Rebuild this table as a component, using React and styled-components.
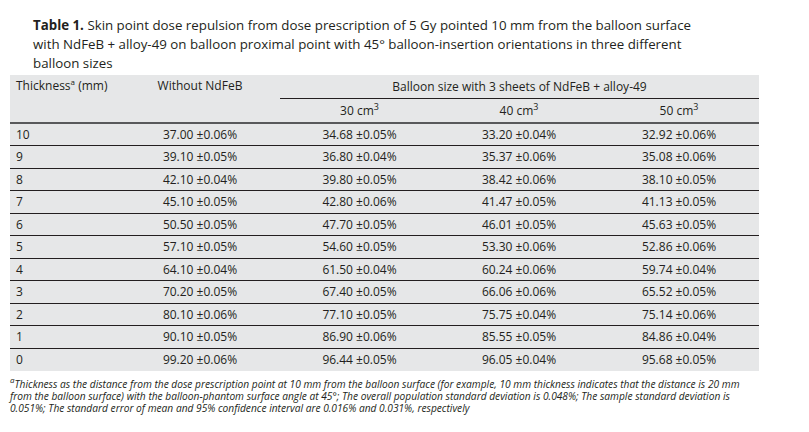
import React from "react";
import styled, { createGlobalStyle } from "styled-components";

const Global = createGlobalStyle`
  html, body { margin: 0; padding: 0; background: #fff; }
  body { font-family: "Open Sans", "Liberation Sans", sans-serif; color: #231f20; }
`;

const Page = styled.div`
  width: 809px;
  height: 432px;
  padding: 16px 0 0 10px;
  box-sizing: border-box;
  overflow: hidden;
`;

const Caption = styled.div`
  padding-left: 23px;
  font-size: 13.3px;
  line-height: 19px;
  white-space: nowrap;
  margin-bottom: 2px;
  b { font-weight: 700; }
`;

const Table = styled.table`
  width: 749px;
  border-collapse: collapse;
  background: #e6e7e8;
  font-size: 12px;
  table-layout: fixed;
`;

const Head = styled.thead`
  border-bottom: 2px solid #58595b;
`;

const Th = styled.th`
  font-weight: 400;
  height: 23px;
  padding: 0;
  padding-left: ${(p) => (p.$left ? 6 : 0)}px;
  text-align: ${(p) => (p.$left ? "left" : "center")};
  vertical-align: ${(p) => (p.$top ? "top" : "middle")};
  line-height: 22px;
  border-bottom: ${(p) => (p.$rule ? "1px solid #231f20" : "none")};
`;

const Sup = styled.sup`
  font-size: ${(p) => p.$size || 8}px;
  vertical-align: 5px;
  line-height: 0;
`;

const Row = styled.tr`
  height: 22.5px;
  td { border-bottom: 1px solid #231f20; }
  &:last-child td { border-bottom: none; }
`;

const Td = styled.td`
  padding: 0;
  padding-left: ${(p) => (p.$left ? 6 : 0)}px;
  text-align: ${(p) => (p.$left ? "left" : "center")};
  line-height: 21px;
`;

const Foot = styled.div`
  margin-top: 7px;
  font-size: 10.2px;
  line-height: 12.4px;
  font-style: italic;
  white-space: nowrap;
`;

const FootLine = styled.div`
  height: 12px;
`;

const rows = [
  ["10", "37.00 ±0.06%", "34.68 ±0.05%", "33.20 ±0.04%", "32.92 ±0.06%"],
  ["9", "39.10 ±0.05%", "36.80 ±0.04%", "35.37 ±0.06%", "35.08 ±0.06%"],
  ["8", "42.10 ±0.04%", "39.80 ±0.05%", "38.42 ±0.06%", "38.10 ±0.05%"],
  ["7", "45.10 ±0.05%", "42.80 ±0.06%", "41.47 ±0.05%", "41.13 ±0.05%"],
  ["6", "50.50 ±0.05%", "47.70 ±0.05%", "46.01 ±0.05%", "45.63 ±0.05%"],
  ["5", "57.10 ±0.05%", "54.60 ±0.05%", "53.30 ±0.06%", "52.86 ±0.06%"],
  ["4", "64.10 ±0.04%", "61.50 ±0.04%", "60.24 ±0.06%", "59.74 ±0.04%"],
  ["3", "70.20 ±0.05%", "67.40 ±0.05%", "66.06 ±0.06%", "65.52 ±0.05%"],
  ["2", "80.10 ±0.06%", "77.10 ±0.05%", "75.75 ±0.04%", "75.14 ±0.06%"],
  ["1", "90.10 ±0.05%", "86.90 ±0.06%", "85.55 ±0.05%", "84.86 ±0.04%"],
  ["0", "99.20 ±0.06%", "96.44 ±0.05%", "96.05 ±0.04%", "95.68 ±0.05%"],
];

export default function App() {
  return (
    <>
      <Global />
      <Page>
        <Caption>
          <b>Table 1.</b> Skin point dose repulsion from dose prescription of 5 Gy pointed 10 mm from the balloon surface
          <br />
          with NdFeB + alloy-49 on balloon proximal point with 45° balloon-insertion orientations in three different
          <br />
          balloon sizes
        </Caption>
        <Table>
          <colgroup>
            <col style={{ width: 110 }} />
            <col style={{ width: 160 }} />
            <col style={{ width: 159 }} />
            <col style={{ width: 160 }} />
            <col style={{ width: 160 }} />
          </colgroup>
          <Head>
            <tr>
              <Th $left $top rowSpan={2}>
                Thickness<Sup>a</Sup> (mm)
              </Th>
              <Th $top rowSpan={2}>Without NdFeB</Th>
              <Th colSpan={3} $rule>
                Balloon size with 3 sheets of NdFeB + alloy-49
              </Th>
            </tr>
            <tr>
              <Th>30 cm<Sup $size={9}>3</Sup></Th>
              <Th>40 cm<Sup $size={9}>3</Sup></Th>
              <Th>50 cm<Sup $size={9}>3</Sup></Th>
            </tr>
          </Head>
          <tbody>
            {rows.map((r) => (
              <Row key={r[0]}>
                <Td $left>{r[0]}</Td>
                <Td>{r[1]}</Td>
                <Td>{r[2]}</Td>
                <Td>{r[3]}</Td>
                <Td>{r[4]}</Td>
              </Row>
            ))}
          </tbody>
        </Table>
        <Foot>
          <Sup>a</Sup>Thickness as the distance from the dose prescription point at 10 mm from the balloon surface (for example, 10 mm thickness indicates that the distance is 20 mm
          <br />
          from the balloon surface) with the balloon-phantom surface angle at 45°; The overall population standard deviation is 0.048%; The sample standard deviation is
          <br />
          0.051%; The standard error of mean and 95% confidence interval are 0.016% and 0.031%, respectively
        </Foot>
      </Page>
    </>
  );
}
